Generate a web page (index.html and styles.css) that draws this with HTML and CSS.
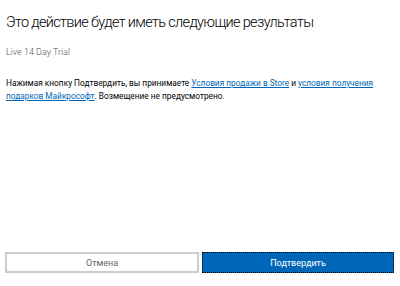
FILE: index.html
```html
<!DOCTYPE html>
<html lang="ru">
<head>
    <meta charset="UTF-8">
    <title>Подтверждение</title>
    <link rel="stylesheet" href="styles.css">
</head>
<body>

<div class="dialog">
    <div class="content">
        <h1>Это действие будет иметь следующие результаты</h1>
        <div class="product">Live 14 Day Trial</div>
        <p class="terms">Нажимая кнопку Подтвердить, вы принимаете <a href="#">Условия продажи в Store</a> и <a href="#">условия получения подарков Майкрософт</a>. Возмещение не предусмотрено.</p>
    </div>

    <!-- кнопки -->
    <div class="actions">
        <button class="btn cancel">Отмена</button>
        <button class="btn confirm">Подтвердить</button>
    </div>
</div>

</body>
</html>
```

FILE: styles.css
```css
body {
    margin: 0;
    font-family: Roboto, "Noto Sans", sans-serif;
    background-color: #FFFFFF;
    color: #000000;
}
.dialog {
    height: 286px;
    display: flex;
    flex-direction: column;
    box-sizing: border-box;
    padding: 0 6px 13px 5px;
}
.content {
    flex: 1;
    padding-left: 1px;
}
h1 {
    font-size: 14.5px;
    font-weight: 300;
    letter-spacing: -0.65px;
    margin: 12px 0 0 0;
    line-height: 22px;
}
.product {
    font-size: 9px;
    font-weight: 300;
    color: #555555;
    margin-top: 12px;
    line-height: 12px;
}
.terms {
    font-size: 8.3px;
    line-height: 13px;
    margin: 19px 0 0 0;
    padding-right: 10px;
}
.terms a {
    color: #0067B8;
}
.actions {
    display: flex;
    gap: 3px;
}
.btn {
    flex: 1;
    height: 21px;
    font-family: inherit;
    font-size: 9px;
    border: 2px solid transparent;
    padding: 0;
}
.cancel {
    background-color: #FFFFFF;
    border-color: #CCCCCC;
    color: #666666;
}
.confirm {
    background-color: #0067B8;
    color: #FFFFFF;
    border: 1px dotted #000000;
}
```
